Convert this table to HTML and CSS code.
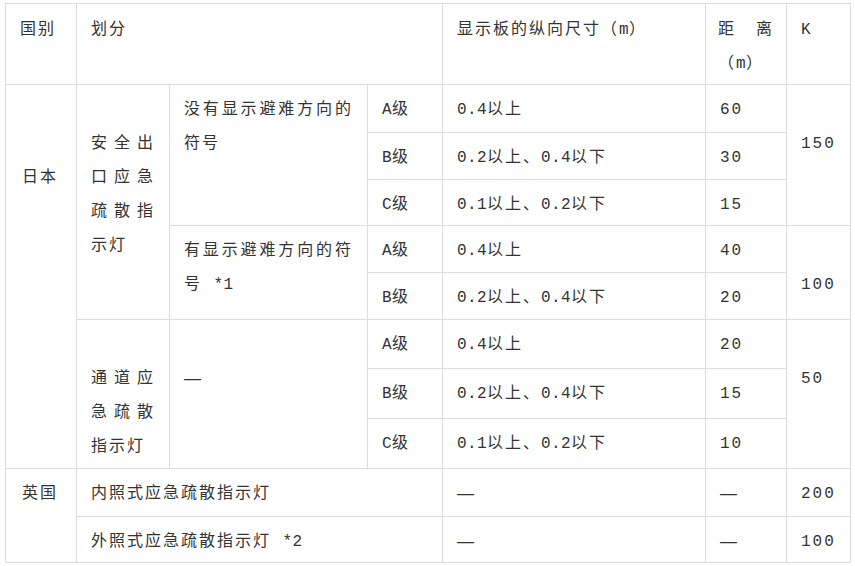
FILE: index.html
```html
<!DOCTYPE html>
<html lang="zh-CN">
<head>
<meta charset="utf-8">
<title>应急疏散指示灯</title>
<link rel="stylesheet" href="styles.css">
</head>
<body>
<table class="spec">
  <colgroup>
    <col class="c1"><col class="c2"><col class="c3"><col class="c4"><col class="c5"><col class="c6"><col class="c7">
  </colgroup>
  <tr class="head">
    <td>国别</td>
    <td colspan="3">划分</td>
    <td>显示板的纵向尺寸（<span class="en">m</span>）</td>
    <td class="dist">距离（<span class="en">m</span>）</td>
    <td><span class="en">K</span></td>
  </tr>
  <tr class="r48">
    <td rowspan="8" class="skip2 country">日本</td>
    <td rowspan="5" class="skip1 narrow">安全出口应急疏散指示灯</td>
    <td rowspan="3">没有显示避难方向的符号</td>
    <td><span class="en">A</span>级</td>
    <td><span class="en">0.4</span>以上</td>
    <td class="en">60</td>
    <td rowspan="3" class="skip1 en">150</td>
  </tr>
  <tr class="r47">
    <td><span class="en">B</span>级</td>
    <td><span class="en">0.2</span>以上、<span class="en">0.4</span>以下</td>
    <td class="en">30</td>
  </tr>
  <tr class="r46">
    <td><span class="en">C</span>级</td>
    <td><span class="en">0.1</span>以上、<span class="en">0.2</span>以下</td>
    <td class="en">15</td>
  </tr>
  <tr class="r47">
    <td rowspan="2">有显示避难方向的符号 <span class="en">*1</span></td>
    <td><span class="en">A</span>级</td>
    <td><span class="en">0.4</span>以上</td>
    <td class="en">40</td>
    <td rowspan="2" class="skip1 en">100</td>
  </tr>
  <tr class="r47">
    <td><span class="en">B</span>级</td>
    <td><span class="en">0.2</span>以上、<span class="en">0.4</span>以下</td>
    <td class="en">20</td>
  </tr>
  <tr class="r49">
    <td rowspan="3" class="skip1 narrow">通道应急疏散指示灯</td>
    <td rowspan="3" class="skip1 dash">—</td>
    <td><span class="en">A</span>级</td>
    <td><span class="en">0.4</span>以上</td>
    <td class="en">20</td>
    <td rowspan="3" class="skip1 en">50</td>
  </tr>
  <tr class="r50">
    <td><span class="en">B</span>级</td>
    <td><span class="en">0.2</span>以上、<span class="en">0.4</span>以下</td>
    <td class="en">15</td>
  </tr>
  <tr class="r50">
    <td><span class="en">C</span>级</td>
    <td><span class="en">0.1</span>以上、<span class="en">0.2</span>以下</td>
    <td class="en">10</td>
  </tr>
  <tr class="r48">
    <td rowspan="2" class="country">英国</td>
    <td colspan="3">内照式应急疏散指示灯</td>
    <td class="dash">—</td>
    <td class="dash">—</td>
    <td class="en">200</td>
  </tr>
  <tr class="r46">
    <td colspan="3">外照式应急疏散指示灯 <span class="en">*2</span></td>
    <td class="dash">—</td>
    <td class="dash">—</td>
    <td class="en">100</td>
  </tr>
</table>
</body>
</html>
```
FILE: styles.css
```css
html, body {
  background: #ffffff;
}
body {
  margin: 3px 0 0 5px;
  font-family: "Liberation Mono", "Noto Sans CJK SC", monospace;
  font-size: 16px;
  color: #333333;
}
.spec {
  border-collapse: collapse;
  table-layout: fixed;
  width: 845px;
}
.c1 { width: 71px; }
.c2 { width: 93px; }
.c3 { width: 198px; }
.c4 { width: 75px; }
.c5 { width: 263px; }
.c6 { width: 81px; }
.c7 { width: 64px; }

.spec td {
  border: 1px solid #dddddd;
  padding: 8px 14px 0 14px;
  vertical-align: top;
  line-height: 34px;
  letter-spacing: 2px;
  text-align: justify;
  word-break: normal;
}
.spec .head td {
  padding-top: 9px;
}
.head { height: 81px; }
.r46 { height: 46px; }
.r47 { height: 47px; }
.r48 { height: 48px; }
.r49 { height: 49px; }
.r50 { height: 50px; }

.spec td.skip1 { padding-top: 42px; }
.spec td.skip2 { padding-top: 76px; }
.spec td.country { padding-left: 16px; }
.spec td.narrow { padding-right: 14px; }
.spec td.dist { padding-left: 12px; padding-right: 12px; }

.en {
  letter-spacing: 0.4px;
}
.spec td.dash {
  font-family: "Liberation Sans", sans-serif;
  font-size: 17px;
}
```
